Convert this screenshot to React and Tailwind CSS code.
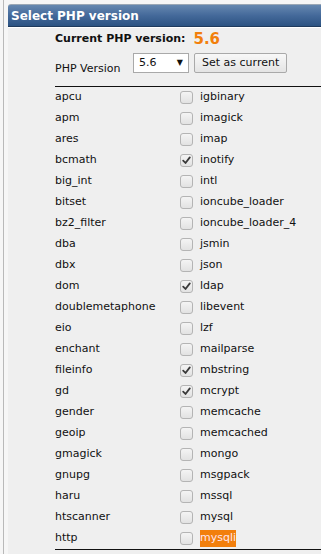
import React from 'react';

const rows = [
    ['apcu', 'igbinary', false],
    ['apm', 'imagick', false],
    ['ares', 'imap', false],
    ['bcmath', 'inotify', true],
    ['big_int', 'intl', false],
    ['bitset', 'ioncube_loader', false],
    ['bz2_filter', 'ioncube_loader_4', false],
    ['dba', 'jsmin', false],
    ['dbx', 'json', false],
    ['dom', 'ldap', true],
    ['doublemetaphone', 'libevent', false],
    ['eio', 'lzf', false],
    ['enchant', 'mailparse', false],
    ['fileinfo', 'mbstring', true],
    ['gd', 'mcrypt', true],
    ['gender', 'memcache', false],
    ['geoip', 'memcached', false],
    ['gmagick', 'mongo', false],
    ['gnupg', 'msgpack', false],
    ['haru', 'mssql', false],
    ['htscanner', 'mysql', false],
    ['http', 'mysqli', false],
];

function Checkbox({ checked }) {
    return (
        <div className="w-[13px] h-[13px] rounded-[3px] border border-[#b4b4b4] bg-gradient-to-b from-[#f4f4f4] to-[#e2e2e2] flex items-center justify-center">
            {checked && (
                <svg width="9" height="9" viewBox="0 0 9 9">
                    <path d="M1.2 4.6 L3.5 7 L7.8 1.4" fill="none" stroke="#3a3a3a" strokeWidth="1.8" strokeLinecap="round" strokeLinejoin="round" />
                </svg>
            )}
        </div>
    );
}

export default function App() {
    return (
        <div className="w-[321px] h-[554px] overflow-hidden flex bg-[#f6f6f6] font-['DejaVu_Sans',Verdana,sans-serif] text-[11px] text-[#111]">
            <div className="w-[3px]" />
            <div className="w-px bg-[#b9b9b9]" />
            <div className="w-[4px]" />
            <div className="flex-1 flex flex-col pt-[4px]">
                <div className="h-[23px] rounded-tl-[3px] border-t border-[#9aa7b5] border-b border-b-[#1f3a5c] bg-gradient-to-b from-[#6688b0] via-[#44699a] to-[#2c5382] flex items-center pl-[3px]">
                    <span className="text-white font-bold text-[12px] leading-none">Select PHP version</span>
                </div>
                <div className="h-px bg-white" />
                <div className="flex-1 bg-[#efefef] pl-[47px]">
                    <div className="flex items-center h-[21px] pt-[1px]">
                        <span className="font-bold text-[11px]">Current PHP version:</span>
                        <span className="ml-[8px] font-bold text-[15px] text-[#f27f0c] leading-none">5.6</span>
                    </div>
                    <div className="flex items-start h-[37px] pt-[4px]">
                        <span className="mt-[8px] w-[77px]">PHP Version</span>
                        <div className="ml-px w-[56px] h-[20px] border border-[#a9a9a9] bg-white flex items-center justify-between px-[5px]">
                            <span>5.6</span>
                            <span className="text-[8px]">▼</span>
                        </div>
                        <div className="ml-[5px] h-[20px] px-[7px] border border-[#a9a9a9] rounded-[2px] bg-gradient-to-b from-[#f8f8f8] to-[#e4e4e4] flex items-center">
                            Set as current
                        </div>
                    </div>
                    <div className="border-t border-[#111] border-b">
                        {rows.map(([a, b, c], i) => (
                            <div key={i} className="flex items-center h-[21px]">
                                <span className="w-[125px]">{a}</span>
                                <Checkbox checked={c} />
                                <span className={'ml-[7px] ' + (b === 'mysqli' ? 'bg-[#f27f0c] text-[#ffe6ee]' : '')}>{b}</span>
                            </div>
                        ))}
                    </div>
                </div>
            </div>
        </div>
    );
}
